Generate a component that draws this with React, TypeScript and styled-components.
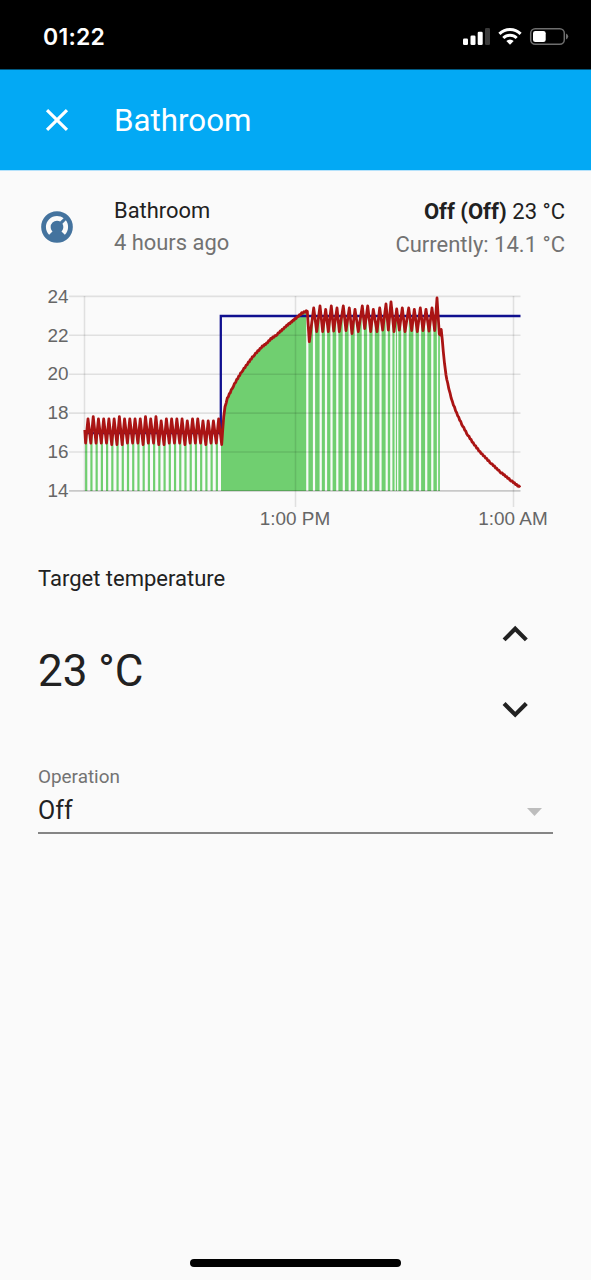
import React from "react";
import styled, { createGlobalStyle } from "styled-components";

const GlobalStyle = createGlobalStyle`
  html, body { margin: 0; padding: 0; background: #fafafa; }
  * { box-sizing: border-box; }
`;

const Screen = styled.div`
  display: flex;
  flex-direction: column;
  width: 591px;
  height: 1280px;
  overflow: hidden;
  background: #fafafa;
  color: #212121;
  font-family: Roboto, "Liberation Sans", sans-serif;
`;

const StatusBar = styled.div`
  display: flex;
  align-items: center;
  justify-content: space-between;
  height: 69px;
  padding: 4px 22px 0 43px;
  background: #000;
  color: #fff;
`;

const Clock = styled.div`
  font: 600 23px/28px Inter, sans-serif;
  letter-spacing: 0.25px;
`;

const StatusIcons = styled.svg`
  display: block;
  width: 107px;
  height: 20px;
`;

const Toolbar = styled.header`
  display: flex;
  align-items: center;
  height: 102px;
  padding-left: 38px;
  background: #03a9f4;
  border-top: 1px solid #01587f;
  border-bottom: 1px solid #b5e2fb;
  color: #fff;
`;

const Icon = styled.svg<{ $size: number }>`
  display: block;
  flex: none;
  width: ${(p) => p.$size}px;
  height: ${(p) => p.$size}px;
  fill: currentColor;
`;

const Title = styled.h1`
  margin: 2px 0 0 38px;
  font-size: 31.3px;
  font-weight: 400;
  line-height: 40px;
`;

const StateRow = styled.section`
  display: flex;
  height: 100px;
  padding: 23px 26px 0 38px;
  font-size: 22px;
`;

const StateIcon = styled.div`
  margin-top: 14px;
  color: #44739e;
`;

const StateInfo = styled.div`
  flex: 1;
  margin-left: 38px;
  padding-top: 1px;
  font-size: 21.9px;
  line-height: 31.5px;
`;

const StateValue = styled.div`
  padding-top: 1px;
  line-height: 33px;
  text-align: right;
`;

const Muted = styled.div`
  color: #727272;
`;

const ChartArea = styled.svg`
  display: block;
  flex: none;
  width: 591px;
  height: 270px;
`;

const TickLabel = styled.text`
  font-family: "Liberation Sans", sans-serif;
  font-size: 18.9px;
  fill: #666;
`;

const Controls = styled.section`
  padding: 0 38px;
`;

const Label = styled.div`
  margin-top: 21px;
  font-size: 22px;
  line-height: 34px;
`;

const TemperatureRow = styled.div`
  display: flex;
  align-items: center;
  justify-content: space-between;
  height: 127px;
  margin-top: 12px;
`;

const Temperature = styled.div`
  font-size: 44px;
  line-height: 56px;
  padding-bottom: 2px;
`;

const Steppers = styled.div`
  display: flex;
  flex-direction: column;
  gap: 25px;
  margin-right: 12.5px;
`;

const Caption = styled.div`
  margin-top: 30px;
  font-size: 18.9px;
  line-height: 24px;
  color: #737373;
`;

const Select = styled.div`
  display: flex;
  align-items: center;
  justify-content: space-between;
  height: 45px;
  padding-right: 11.5px;
  border-bottom: 2px solid #858585;
  font-size: 25px;
  line-height: 40px;
`;

const Caret = styled.svg`
  width: 15px;
  height: 8px;
  margin-top: 3px;
  fill: #bdbdbd;
`;

const HomeIndicator = styled.div`
  width: 211px;
  height: 8px;
  margin: auto auto 13px 190px;
  border-radius: 4px;
  background: #000;
`;

type Point = [number, number];

const BASE = 491;

// Idle phase: short heating bursts that keep the room around 17 °C.
const idleStep = 5.226;
const idlePeaks: Record<number, number> = {
  1: 416.7, 6: 416.7, 11: 416.7, 13: 416.7, 14: 421, 19: 421, 22: 421, 23: 421, 24: 421,
};
const idleDeep = [5, 6, 7, 11, 14, 15, 19, 23];
const idle: Point[] = [[84.8, 430]];
for (let i = 0; i < 26; i++) {
  const x = 85.6 + i * idleStep;
  idle.push([x, idleDeep.includes(i) ? 444.5 : 443]);
  idle.push([x + 2.4, idlePeaks[i] ?? 419]);
}

const warmUp: Point[] = [
  [221.7, 444.5], [222.7, 430], [223.7, 417], [225, 406.7], [227.3, 398.5], [232.3, 388],
  [236.7, 380], [241.7, 371.7], [248.3, 362.7], [253.3, 356], [262.3, 346.5], [266.7, 343.3],
  [270.7, 339], [276, 335.3], [286.7, 325.7], [295, 319], [301.7, 313.3], [307.3, 310.7],
];

const holding: Point[] = [
  [309.3, 341.7], [313.7, 308], [316.7, 331.5], [320, 306], [322.7, 331.5], [325.7, 309.3],
  [328.3, 331.5], [331.3, 306], [333.7, 331], [337, 308], [339.3, 331.5], [343.3, 306],
  [346, 330.5], [349.3, 308], [352, 333.5], [355, 309.3], [358.3, 331.5], [362.3, 306],
  [364.7, 328.5], [367.7, 306], [370.7, 331.5], [373.3, 309.3], [377, 331.5], [379.7, 308],
  [382.7, 330], [386, 304], [388.3, 330], [391, 302], [394, 331.5], [396.7, 309],
  [399.3, 330], [402.3, 308], [405, 331.5], [408.7, 308], [411.7, 330.5], [414.3, 309.3],
  [417.3, 331.5], [420.3, 308], [423, 330.5], [426, 309.3], [429, 331], [432, 308],
  [434.7, 330.5], [437, 298], [439.3, 334],
];

const coolDown: Point[] = [
  [440.3, 335], [441.2, 329.5], [442.3, 340], [443.3, 351.7], [444.5, 363.3], [446, 375],
  [447.7, 383.5], [450, 393.3], [452.3, 401.7], [456.7, 413.3], [461.7, 424], [466.7, 433.3],
  [473.3, 443.3], [480, 452], [490, 462.3], [500, 471.7], [510, 479.7], [516.7, 485], [520, 487],
];

const serrate = (points: Point[]): Point[] => {
  const out: Point[] = [];
  points.forEach((p, i) => {
    if (i === 0) {
      out.push(p);
      return;
    }
    const [ax, ay] = points[i - 1];
    const n = Math.max(1, Math.round((p[0] - ax) / 1.1));
    for (let k = 1; k <= n; k++) {
      const t = k / n;
      out.push([ax + (p[0] - ax) * t, ay + (p[1] - ay) * t + (n > 1 ? (k % 2 ? 0.5 : -0.5) : 0)]);
    }
  });
  return out;
};

const temperature = [...idle, ...serrate(warmUp), ...holding, ...serrate(coolDown)];
const toPath = (points: Point[]) =>
  "M" + points.map(([x, y]) => `${x.toFixed(2)} ${y.toFixed(2)}`).join("L");

const idleBars = Array.from({ length: 26 }, (_, i) => 85.1 + i * idleStep);
const gaps = [
  307.3, 314, 320.7, 326, 331.5, 337.3, 343.8, 349.7, 355.8, 362.8, 368.2, 373.7, 380.5, 386.7,
  391.3, 395.2, 397.7, 402.3, 407.7, 414.5, 420, 426.2, 432.3, 437.5,
];
const narrowGaps = [395.2, 397.7, 437.5];

const yTicks = [24, 22, 20, 18, 16, 14];
const xTicks = [
  { x: 295.5, label: "1:00 PM" },
  { x: 513.5, label: "1:00 AM" },
];

const HistoryChart = () => (
  <ChartArea viewBox="0 271 591 270">
    <clipPath id="under-curve">
      <path d={`${toPath(temperature)}L520 ${BASE}L84.5 ${BASE}Z`} />
    </clipPath>
    <g clipPath="url(#under-curve)" fill="#70cf70">
      {idleBars.map((x) => (
        <rect key={x} x={x} y={290} width={2.2} height={BASE - 290} />
      ))}
      <rect x={221} y={290} width={218.9} height={BASE - 290} />
      {gaps.map((x) => {
        const w = narrowGaps.includes(x) ? 1.3 : 2.2;
        return <rect key={x} x={x - w / 2} y={290} width={w} height={BASE - 290} fill="#f8fbf8" />;
      })}
    </g>
    <g stroke="#000" strokeOpacity={0.1} strokeWidth={1.6}>
      {yTicks.map((v, i) => (
        <line key={v} x1={69} x2={520.5} y1={296.4 + i * 38.9} y2={296.4 + i * 38.9} />
      ))}
      <line x1={69} x2={520.5} y1={490.9} y2={490.9} />
      <line x1={84.5} x2={84.5} y1={296} y2={491} />
      {xTicks.map((t) => (
        <line key={t.x} x1={t.x} x2={t.x} y1={296} y2={507} />
      ))}
    </g>
    <path d="M84.8 433H220.8V316H520.5" fill="none" stroke="#10108f" strokeWidth={2.3} />
    <path d={toPath(temperature)} fill="none" stroke="#aa1414" strokeWidth={2.8} strokeLinejoin="round" />
    {yTicks.map((v, i) => (
      <TickLabel key={v} x={68.5} y={302.6 + i * 38.9} textAnchor="end">{v}</TickLabel>
    ))}
    {xTicks.map((t) => (
      <TickLabel key={t.x} x={t.x - 0.5} y={525} textAnchor="middle">{t.label}</TickLabel>
    ))}
  </ChartArea>
);

const DeviceStatus = () => (
  <StatusIcons viewBox="462 27 107 20" fill="#fff">
    <rect x="463" y="38.5" width="5" height="6.5" rx="1.3" />
    <rect x="470.5" y="35.5" width="5" height="9.5" rx="1.3" />
    <rect x="477.7" y="31.7" width="5" height="13.3" rx="1.3" />
    <rect x="485" y="28" width="5" height="17" rx="1.3" fill="#3a3a3a" />
    <g fill="none" stroke="#fff" strokeWidth="3">
      <path d="M499.4 33.8A15.2 15.2 0 0 1 520.6 33.8" />
      <path d="M503.3 38A9.6 9.6 0 0 1 516.7 38" />
    </g>
    <path d="M510 44.8L506.3 41.1A5.3 5.3 0 0 1 513.7 41.1Z" />
    <rect x="530.7" y="28.7" width="33.6" height="15.6" rx="4.5" fill="none" stroke="#6e6e6e" strokeWidth="1.5" />
    <rect x="533" y="31" width="12.7" height="11" rx="2.3" />
    <path d="M566 33.5Q568.2 34.3 568.2 36.5T566 39.5Z" fill="#6e6e6e" />
  </StatusIcons>
);

export default function App() {
  return (
    <Screen>
      <GlobalStyle />
      <StatusBar>
        <Clock>01:22</Clock>
        <DeviceStatus />
      </StatusBar>
      <Toolbar>
        <Icon $size={38} viewBox="0 0 24 24">
          <path d="M19 6.41L17.59 5 12 10.59 6.41 5 5 6.41 10.59 12 5 17.59 6.41 19 12 13.41 17.59 19 19 17.59 13.41 12z" />
        </Icon>
        <Title>Bathroom</Title>
      </Toolbar>
      <StateRow>
        <StateIcon>
          <Icon $size={38} viewBox="0 0 24 24">
            <path d="M16.95,16.95L14.83,14.83C15.55,14.1 16,13.1 16,12C16,11.26 15.79,10.57 15.43,10L17.6,7.81C18.5,9 19,10.43 19,12C19,13.93 18.22,15.68 16.95,16.95M12,5C13.57,5 15,5.5 16.19,6.4L14,8.56C13.43,8.21 12.74,8 12,8A4,4 0 0,0 8,12C8,13.1 8.45,14.1 9.17,14.83L7.05,16.95C5.78,15.68 5,13.93 5,12A7,7 0 0,1 12,5M12,2A10,10 0 0,0 2,12A10,10 0 0,0 12,22A10,10 0 0,0 22,12A10,10 0 0,0 12,2Z" />
          </Icon>
        </StateIcon>
        <StateInfo>
          <div>Bathroom</div>
          <Muted>4 hours ago</Muted>
        </StateInfo>
        <StateValue>
          <div><b>Off (Off)</b> 23 °C</div>
          <Muted>Currently: 14.1 °C</Muted>
        </StateValue>
      </StateRow>
      <HistoryChart />
      <Controls>
        <Label>Target temperature</Label>
        <TemperatureRow>
          <Temperature>23 °C</Temperature>
          <Steppers>
            <Icon $size={50.4} viewBox="0 0 24 24">
              <path d="M7.41,15.41L12,10.83L16.59,15.41L18,14L12,8L6,14L7.41,15.41Z" />
            </Icon>
            <Icon $size={50.4} viewBox="0 0 24 24">
              <path d="M7.41,8.58L12,13.17L16.59,8.58L18,10L12,16L6,10L7.41,8.58Z" />
            </Icon>
          </Steppers>
        </TemperatureRow>
        <Caption>Operation</Caption>
        <Select>
          <span>Off</span>
          <Caret viewBox="0 0 15 8"><path d="M0 0H15L7.5 8Z" /></Caret>
        </Select>
      </Controls>
      <HomeIndicator />
    </Screen>
  );
}
